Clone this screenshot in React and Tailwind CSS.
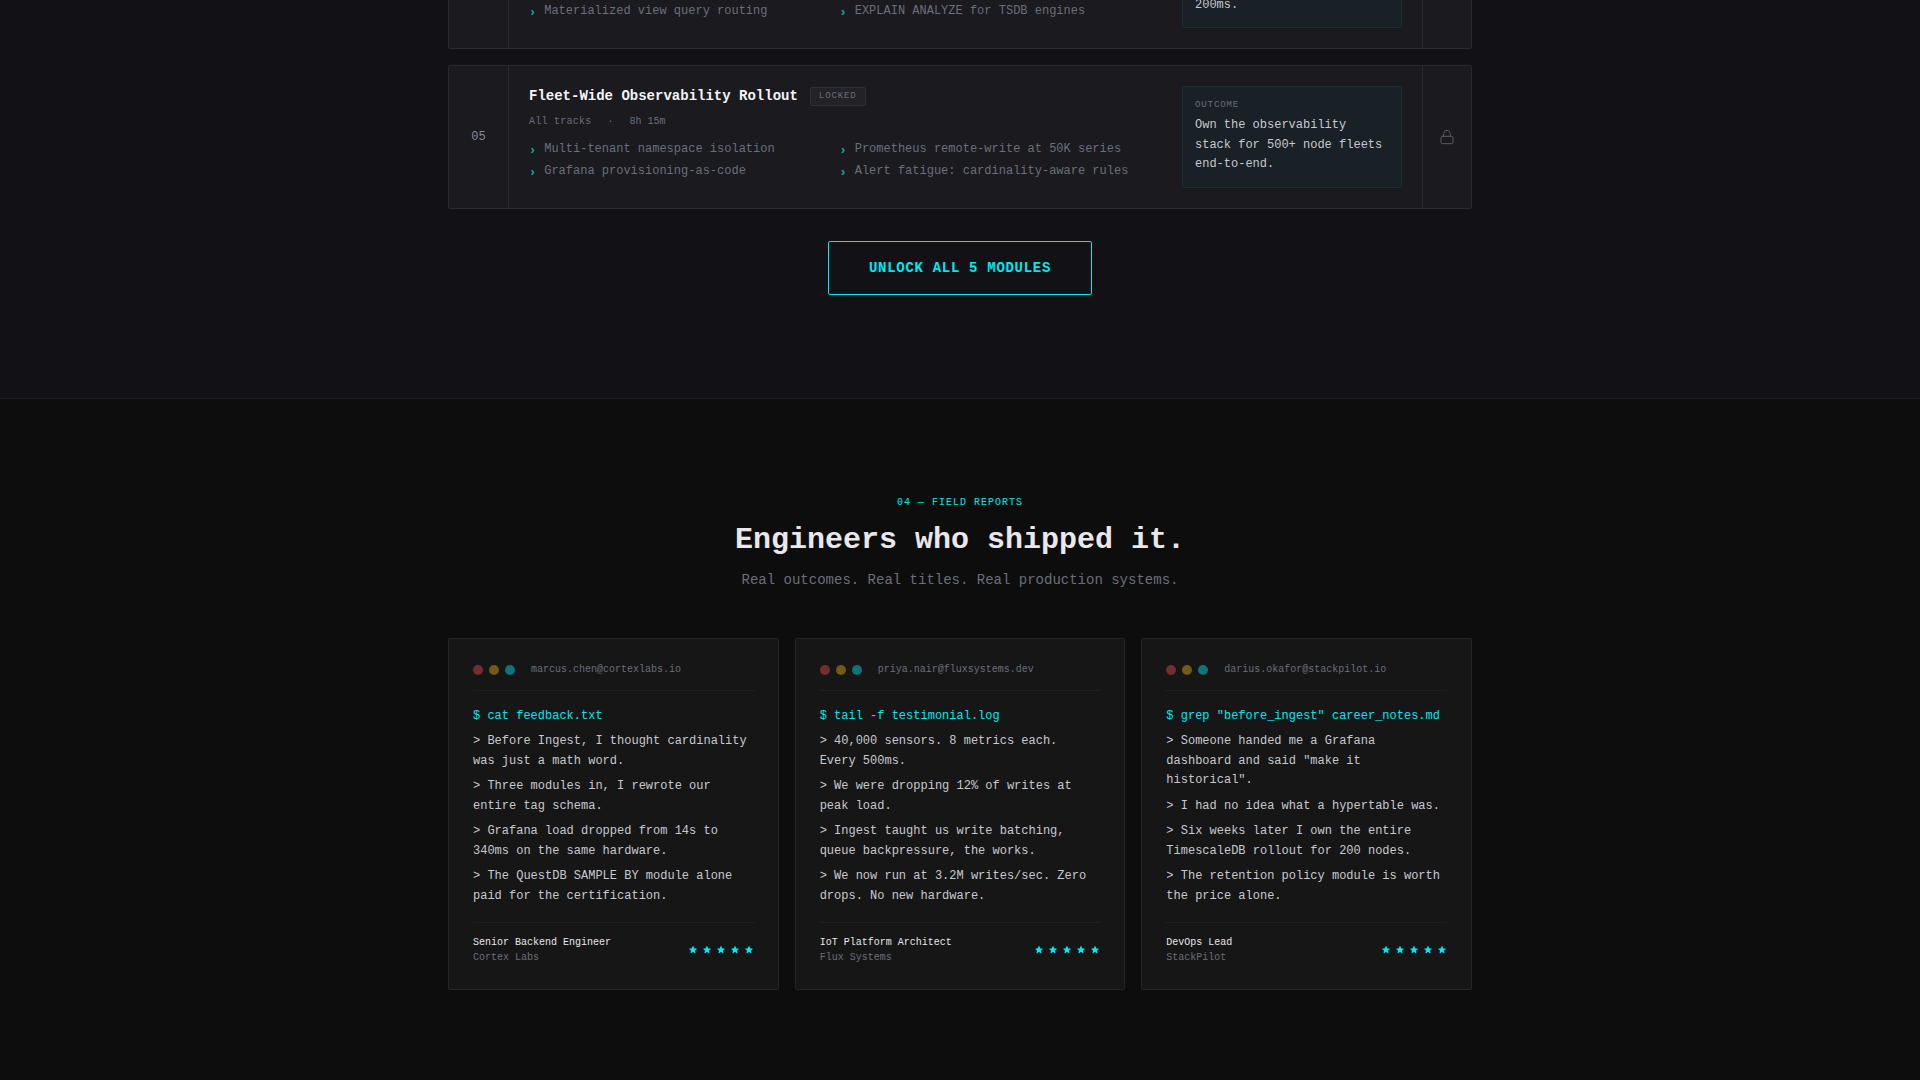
import { Lock } from "lucide-react";

const modules = [
  {
    items: ["Materialized view query routing", "EXPLAIN ANALYZE for TSDB engines"],
    outcome: "200ms.",
  },
  {
    number: "05",
    title: "Fleet-Wide Observability Rollout",
    track: "All tracks",
    duration: "8h 15m",
    items: [
      "Multi-tenant namespace isolation",
      "Prometheus remote-write at 50K series",
      "Grafana provisioning-as-code",
      "Alert fatigue: cardinality-aware rules",
    ],
    outcome: "Own the observability stack for 500+ node fleets end-to-end.",
  },
];

const reports = [
  {
    email: "marcus.chen@cortexlabs.io",
    command: "cat feedback.txt",
    lines: [
      "Before Ingest, I thought cardinality was just a math word.",
      "Three modules in, I rewrote our entire tag schema.",
      "Grafana load dropped from 14s to 340ms on the same hardware.",
      "The QuestDB SAMPLE BY module alone paid for the certification.",
    ],
    role: "Senior Backend Engineer",
    company: "Cortex Labs",
  },
  {
    email: "priya.nair@fluxsystems.dev",
    command: "tail -f testimonial.log",
    lines: [
      "40,000 sensors. 8 metrics each. Every 500ms.",
      "We were dropping 12% of writes at peak load.",
      "Ingest taught us write batching, queue backpressure, the works.",
      "We now run at 3.2M writes/sec. Zero drops. No new hardware.",
    ],
    role: "IoT Platform Architect",
    company: "Flux Systems",
  },
  {
    email: "darius.okafor@stackpilot.io",
    command: 'grep "before_ingest" career_notes.md',
    lines: [
      'Someone handed me a Grafana dashboard and said "make it historical".',
      "I had no idea what a hypertable was.",
      "Six weeks later I own the entire TimescaleDB rollout for 200 nodes.",
      "The retention policy module is worth the price alone.",
    ],
    role: "DevOps Lead",
    company: "StackPilot",
  },
];

function ModuleCard({ number, title, track, duration, items, outcome }) {
  return (
    <article className="flex shrink-0 rounded-xs border border-[#2a2a2f] bg-[#1a1a1f]">
      <div className="flex w-15 shrink-0 items-center justify-center border-r border-[#2a2a2f] text-xs text-[#84889a]">
        {number}
      </div>
      <div className="flex flex-1 flex-col justify-end p-5">
        {title && (
          <>
            <div className="mb-2 flex items-center gap-3">
              <h3 className="text-sm font-bold text-[#f4f4f6]">{title}</h3>
              <span className="rounded-xs border border-[#303036] bg-[#222227] px-2 py-0.5 text-[9px] leading-[13px] tracking-widest text-[#6b6f7a]">
                LOCKED
              </span>
            </div>
            <div className="mb-[11px] flex gap-4 text-[10px] leading-normal text-[#6b6f7a]">
              <span className="tracking-wide">{track}</span>
              <span>·</span>
              <span>{duration}</span>
            </div>
          </>
        )}
        <ul className="grid grid-cols-2 gap-x-2 gap-y-1 pb-2 text-xs leading-normal text-[#6b6f7a]">
          {items.map((item) => (
            <li key={item} className="flex gap-2">
              <span className="mt-0.5 h-4 leading-[18px] font-bold text-[#00e8e0]/75">›</span>
              {item}
            </li>
          ))}
        </ul>
      </div>
      <div className="flex w-65 shrink-0 flex-col p-5">
        <div className="flex-1 rounded-xs border border-[#183036] bg-[#192026] p-3">
          {title && (
            <p className="mb-1 text-[9px] leading-[13px] tracking-widest text-[#6b6f7a]">OUTCOME</p>
          )}
          <p className="text-xs leading-relaxed text-[#c8c9d0]">{outcome}</p>
        </div>
      </div>
      <div className="flex w-[49px] shrink-0 items-center justify-center border-l border-[#2a2a2f]">
        {title && <Lock size={16} strokeWidth={1.5} className="text-[#5a5b64]" />}
      </div>
    </article>
  );
}

function Star() {
  return (
    <svg viewBox="0 0 20 20" className="size-2.5 fill-[#00e8f8]">
      <path d="M9.049 2.927c.3-.921 1.603-.921 1.902 0l1.07 3.292a1 1 0 00.95.69h3.462c.969 0 1.371 1.24.588 1.81l-2.8 2.034a1 1 0 00-.364 1.118l1.07 3.292c.3.921-.755 1.688-1.54 1.118l-2.8-2.034a1 1 0 00-1.175 0l-2.8 2.034c-.784.57-1.838-.197-1.539-1.118l1.07-3.292a1 1 0 00-.364-1.118L2.98 8.72c-.783-.57-.38-1.81.588-1.81h3.461a1 1 0 00.951-.69l1.07-3.292z" />
    </svg>
  );
}

function ReportCard({ email, command, lines, role, company }) {
  return (
    <article className="rounded-xs border border-[#262626] bg-[#161616] p-6">
      <header className="flex items-center gap-1.5 border-b border-[#202020] pb-[13px]">
        <span className="size-2.5 rounded-full bg-[#742e30]" />
        <span className="size-2.5 rounded-full bg-[#745a14]" />
        <span className="size-2.5 rounded-full bg-[#0f7478]" />
        <span className="ml-2.5 text-[10px] leading-[14px] text-[#6b6f7a]">{email}</span>
      </header>
      <div className="space-y-1.5 py-4 text-xs leading-relaxed text-[#c8c9d0]">
        <p className="leading-[19px] text-[#00e8f0]">{`$ ${command}`}</p>
        {lines.map((line) => (
          <p key={line}>{`> ${line}`}</p>
        ))}
      </div>
      <footer className="flex items-center justify-between border-t border-[#202020] pt-3 text-[10px] leading-normal">
        <div>
          <p className="text-[#e8e8ec]">{role}</p>
          <p className="text-[#6b6f7a]">{company}</p>
        </div>
        <div className="flex gap-1" role="img" aria-label="5 stars">
          {[1, 2, 3, 4, 5].map((n) => (
            <Star key={n} />
          ))}
        </div>
      </footer>
    </article>
  );
}

export default function App() {
  const [previous, current] = modules;
  return (
    <div className="min-h-screen bg-[#0d0d0d] font-['Liberation_Mono',monospace]">
      <section className="border-b border-[#1c1c20] bg-[#111116] pb-[103px]">
        <div className="mx-auto flex max-w-5xl flex-col">
          <div className="mb-4 flex h-[49px] flex-col justify-end overflow-hidden">
            <ModuleCard {...previous} />
          </div>
          <ModuleCard {...current} />
          <button className="mt-8 cursor-pointer self-center rounded-xs border border-[#00e8f0] px-10 py-4 text-sm font-bold tracking-wider text-[#00e8f0]">
            UNLOCK ALL 5 MODULES
          </button>
        </div>
      </section>
      <section className="mx-auto max-w-5xl py-24">
        <div className="mb-12 text-center">
          <p className="mb-3 text-[10px] leading-normal tracking-widest text-[#00e8f0]">04 — FIELD REPORTS</p>
          <h2 className="mb-3 text-3xl font-bold text-[#e8e8ec]">Engineers who shipped it.</h2>
          <p className="text-sm text-[#6b6f7a]">Real outcomes. Real titles. Real production systems.</p>
        </div>
        <div className="grid grid-cols-3 gap-4">
          {reports.map((report) => (
            <ReportCard key={report.email} {...report} />
          ))}
        </div>
      </section>
    </div>
  );
}
